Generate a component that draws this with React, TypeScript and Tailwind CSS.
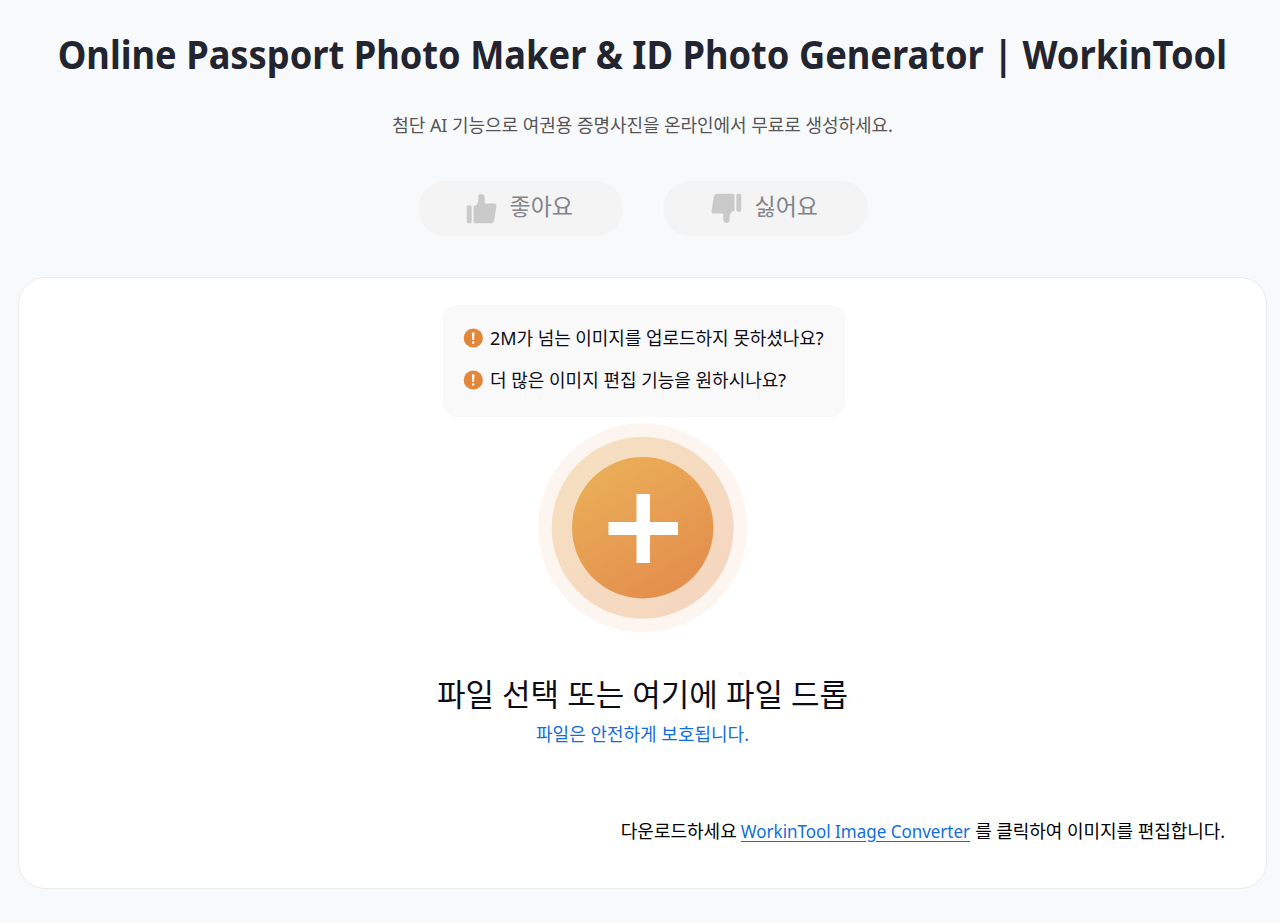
import React from "react";

function ThumbUp({ className = "" }: { className?: string }) {
  return (
    <svg className={className} width="31" height="31" viewBox="0 0 31 31" fill="#cacaca">
      <rect x="0.7" y="12.3" width="5" height="18" rx="1.6" />
      <path d="M7.5 13.2C10.5 12.4 12.3 10.5 12.3 7.5V4.2C12.3 2.2 13.5 1 15.2 1C17.6 1 18.8 2.8 18.8 5.4V10.4H28C30 10.4 30.8 11.7 30.4 13.6L28.2 27.3C27.8 29.3 26.8 30.3 24.8 30.3H9C8 30.3 7.5 29.8 7.5 28.8Z" />
    </svg>
  );
}

function Alert() {
  return (
    <svg className="shrink-0" width="20" height="20" viewBox="0 0 20 20">
      <circle cx="10.3" cy="10" r="9.6" fill="#e28639" />
      <path d="M8.9 4.6h2.6l-.4 7.4H9.3Z" fill="#fff" />
      <circle cx="10.2" cy="14.5" r="1.2" fill="#fff" />
    </svg>
  );
}

function Plus() {
  return (
    <svg className="block" width="210" height="210" viewBox="0 0 210 210">
      <defs>
        <linearGradient id="disc" x1="0.2" y1="0.1" x2="0.7" y2="0.95">
          <stop offset="0" stopColor="#eaad57" />
          <stop offset="1" stopColor="#e38f4d" />
        </linearGradient>
        <linearGradient id="ring" x1="0.1" y1="0.15" x2="0.75" y2="0.85">
          <stop offset="0" stopColor="#f6dfc0" />
          <stop offset="1" stopColor="#f5d7c0" />
        </linearGradient>
      </defs>
      <circle cx="104.7" cy="104.7" r="104.5" fill="#fdf6f0" />
      <circle cx="104.7" cy="104.7" r="91" fill="url(#ring)" />
      <circle cx="104.7" cy="104.7" r="70.7" fill="url(#disc)" />
      <path d="M98.5 71h13.5v28h28v13h-28V140H98.5v-28H70.5V99h28Z" fill="#fff" />
    </svg>
  );
}

export default function App() {
  return (
    <div className="h-[923px] w-[1280px] overflow-hidden bg-[#f8f9fb] pl-[18px] font-['Noto_Sans','Noto_Sans_CJK_KR',sans-serif] text-[#0d0d19]">
      <main className="flex w-[1249px] flex-col items-center whitespace-nowrap">
        <h1 className="mt-[26px] h-[56px] scale-x-[0.906] text-[40px] leading-[56px] font-bold text-[#222530]">
          Online Passport Photo Maker &amp; ID Photo Generator | WorkinTool
        </h1>
        <p className="mt-[28px] h-[30px] text-[18px] leading-[30px] tracking-[-0.05px] text-[#555]">
          첨단 AI 기능으로 여권용 증명사진을 온라인에서 무료로 생성하세요.
        </p>
        <div className="mt-[41px] flex gap-10 text-[23px] text-[#82848c]">
          <button className="flex h-[55px] w-[205px] items-center gap-[13px] rounded-full bg-[#f4f4f4] pl-[48px]">
            <ThumbUp />
            <span className="-mt-1">좋아요</span>
          </button>
          <button className="flex h-[55px] w-[205px] items-center gap-[13px] rounded-full bg-[#f4f4f4] pl-[48px]">
            <ThumbUp className="rotate-180" />
            <span className="-mt-1">싫어요</span>
          </button>
        </div>
        <section className="mt-[41px] flex h-[612px] w-full flex-col items-center rounded-[27px] border border-[#ebebed] bg-white">
          <div className="mt-[27px] ml-[3px] flex h-[112px] w-[402px] flex-col gap-[12px] rounded-[14px] bg-[#f9f9f9] pt-[18px] pl-[20px] text-[18px]">
            <p className="flex h-[30px] items-center gap-[7px]"><Alert /><span className="tracking-[-0.05px]">2M가 넘는 이미지를 업로드하지 못하셨나요?</span></p>
            <p className="flex h-[30px] items-center gap-[7px]"><Alert /><span>더 많은 이미지 편집 기능을 원하시나요?</span></p>
          </div>
          <div className="mt-[6px]"><Plus /></div>
          <h2 className="mt-[37px] h-[48px] text-[31px] leading-[48px]">파일 선택 또는 여기에 파일 드롭</h2>
          <p className="mt-[1px] h-[30px] text-[18px] leading-[30px] text-[#0e6ee0]">파일은 안전하게 보호됩니다.</p>
          <p className="mt-[67px] mr-[41px] h-[30px] self-end text-[18px] leading-[30px] text-black">
            다운로드하세요{" "}
            <a className="-ml-[14px] inline-block origin-right scale-x-[0.943] text-[#0e6ee0] underline underline-offset-[3px]">WorkinTool Image Converter</a>
            {" "}<span className="tracking-[-0.05px]">를 클릭하여 이미지를 편집합니다.</span>
          </p>
        </section>
      </main>
    </div>
  );
}
